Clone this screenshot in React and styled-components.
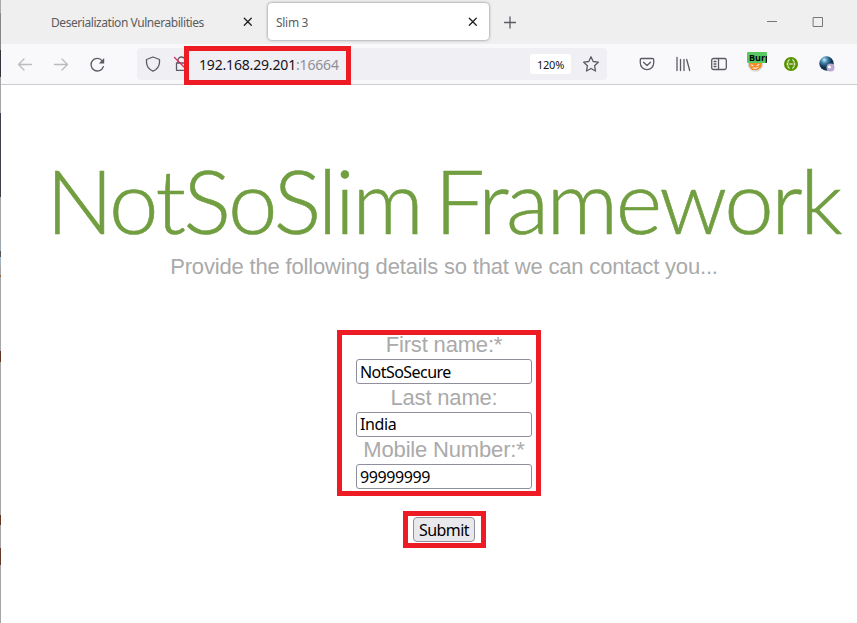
import React from "react";
import styled, { createGlobalStyle } from "styled-components";

const Global = createGlobalStyle`
  * { box-sizing: border-box; }
  body { margin: 0; background: #fff; overflow: hidden; }
`;

const Window = styled.div`
  display: grid;
  grid-template-columns: 1px 856px;
  width: 857px;
  height: 623px;
  background: #fff;
  font-family: "Noto Sans", "Open Sans", sans-serif;
`;

const DesktopEdge = styled.div`
  background: linear-gradient(
    #a9a9a9 0 13px, #858585 13px 50px, #34343c 50px 77px, #a5a5a5 77px 113px,
    #40404a 113px 197px, #a5a5a5 197px 242px, #9aaab4 242px 251px, #555 251px 257px,
    #9fb4c0 257px 266px, #a5a5a5 266px 275px, #9a6236 275px 277px, #a5a5a5 277px 351px,
    #633624 351px 362px, #a5a5a5 362px 515px, #633624 515px 525px, #a5a5a5 525px 548px,
    #663a2b 548px 565px, #a5a5a5 565px
  );
`;

const Browser = styled.div`
  display: flex;
  flex-direction: column;
`;

const TabBar = styled.div`
  display: flex;
  height: 44px;
  padding-top: 3px;
  background: #efefef;
`;

const Tab = styled.div`
  display: flex;
  align-items: center;
  justify-content: space-between;
  width: ${(p) => (p.$active ? "221px" : "267px")};
  height: 37px;
  padding: 0 ${(p) => (p.$active ? "12px 0 8px" : "16px 0 50px")};
  border-radius: 4px;
  background: ${(p) => (p.$active ? "#fff" : "transparent")};
  box-shadow: ${(p) => (p.$active ? "0 0 3px #77777f" : "none")};
  color: #5c5c60;
  font-size: 12px;
  line-height: 17px;
  padding-top: 1px;
  letter-spacing: ${(p) => p.$spacing};
  white-space: nowrap;
`;

const NewTab = styled.div`
  display: flex;
  align-items: center;
  height: 38px;
  margin-left: 15px;
`;

const WindowControls = styled.div`
  display: flex;
  gap: 36px;
  margin: 13px 34px 0 auto;
`;

const NavBar = styled.div`
  display: flex;
  align-items: center;
  height: 41px;
  padding: 0 22px 0 16px;
  background: #f9f9fb;
  border-bottom: 1px solid #ccccd0;
`;

const NavButtons = styled.div`
  display: flex;
  align-items: center;
  gap: 20px;
  width: 120px;
`;

const AddressBar = styled.div`
  display: flex;
  align-items: center;
  width: 470px;
  height: 32px;
  padding: 0 8px;
  border-radius: 4px;
  background: #f0eff4;
`;

const Security = styled.div`
  display: flex;
  align-items: center;
  gap: 12px;
  width: 39px;
`;

const Highlight = styled.div`
  border: 5px solid #ed1c24;
`;

const AddressHighlight = styled(Highlight)`
  display: flex;
  align-items: center;
  flex: none;
  width: 167px;
  height: 39px;
  margin-top: 2px;
  padding: 0 0 2px 10px;
  background: #f0eff4;
  color: #15141a;
  font-size: 14px;
  letter-spacing: -0.17px;
  white-space: nowrap;
`;

const Port = styled.span`
  color: #8f8f96;
`;

const Zoom = styled.div`
  display: flex;
  align-items: center;
  justify-content: center;
  width: 41px;
  height: 20px;
  margin: 0 12px 0 auto;
  border-radius: 3px;
  background: #fff;
  color: #15141a;
  font-size: 11px;
  letter-spacing: -0.2px;
`;

const Extensions = styled.div`
  display: flex;
  align-items: center;
  gap: 20px;
  margin-left: auto;
`;

const Icon = styled.svg`
  display: block;
  flex: none;
  overflow: visible;
  width: ${(p) => p.$w || 16}px;
  height: 16px;
  fill: none;
  stroke: ${(p) => p.$color || "#5b5b66"};
  stroke-width: 1.3;
  stroke-linecap: round;
  stroke-linejoin: round;
`;

const BurpButton = styled.div`
  display: grid;
  width: 20px;
  height: 22px;
  margin: -2px -4px 0 0;
`;

const BurpLabel = styled.span`
  grid-area: 1 / 1;
  z-index: 1;
  width: 20px;
  height: 11px;
  padding-left: 2px;
  overflow: hidden;
  border-radius: 1px;
  background: #58c860;
  color: #000;
  font: bold 9px/11px "Open Sans", sans-serif;
`;

const BurpIcon = styled(Icon)`
  grid-area: 1 / 1;
  margin: 4px 0 0 0;
`;

const Page = styled.main`
  display: flex;
  flex-direction: column;
  align-items: center;
  padding-left: 30px;
  color: #aaa;
  font: 22px/26px "Liberation Sans", Arial, sans-serif;
`;

const Title = styled.h1`
  margin: 62px 2px 0 0;
  height: 107px;
  color: #719e40;
  font: 300 89px/106px Lato, sans-serif;
  letter-spacing: -2.55px;
  word-spacing: -8.5px;
  -webkit-text-stroke: 0.6px #719e40;
  white-space: nowrap;
`;

const Lead = styled.p`
  margin: 0;
  letter-spacing: -0.17px;
  white-space: nowrap;
`;

const Fields = styled(Highlight)`
  display: flex;
  flex-direction: column;
  width: 204px;
  height: 166px;
  margin: 50px 0 0 -10px;
  padding-left: 14px;
`;

const Field = styled.label`
  display: flex;
  flex: none;
  flex-direction: column;
  width: 176px;
  height: 52.5px;
  text-align: center;
  line-height: 19px;
  letter-spacing: -0.17px;
`;

const Input = styled.input`
  width: 176px;
  height: 25px;
  margin-top: 5px;
  padding: 0 3px;
  border: 1px solid #8f8f9d;
  border-radius: 3px;
  background: #fff;
  color: #000;
  font: 16px "Noto Sans", sans-serif;
  letter-spacing: ${(p) => p.$spacing};
`;

const SubmitHighlight = styled(Highlight)`
  display: grid;
  place-items: center;
  width: 83px;
  height: 37px;
  margin-top: 15px;
`;

const Submit = styled.button`
  width: 62px;
  height: 25px;
  padding: 0;
  border: 1px solid #8f8f9d;
  border-radius: 4px;
  background: #e9e9ed;
  color: #000;
  font: 16px/22px "Noto Sans", sans-serif;
  letter-spacing: -0.6px;
`;

const Close = () => (
  <Icon $w={8} $color="#222" viewBox="0 0 8 16"><path d="M0.3 4.3l7 7M7.3 4.3l-7 7" /></Icon>
);

const fields = [
  { label: "First name:*", value: "NotSoSecure", spacing: "-0.55px" },
  { label: "Last name:", value: "India", spacing: "-0.4px" },
  { label: "Mobile Number:*", value: "99999999", spacing: "-0.4px" },
];

export default function App() {
  return (
    <Window>
      <Global />
      <DesktopEdge />
      <Browser>
        <TabBar>
          <Tab $spacing="-0.44px">Deserialization Vulnerabilities<Close /></Tab>
          <Tab $active $spacing="-0.3px">Slim 3<Close /></Tab>
          <NewTab><Icon $w={12} viewBox="0 0 12 16"><path d="M0.5 8.5h11M6 3v11" /></Icon></NewTab>
          <WindowControls>
            <Icon $w={10} $color="#777" viewBox="0 0 10 16"><path d="M0 5.5h10" strokeWidth="1" strokeLinecap="butt" /></Icon>
            <Icon $w={10} $color="#777" viewBox="0 0 10 16"><path d="M.5 1.5h9v9h-9z" strokeWidth="1" strokeLinejoin="miter" /></Icon>
          </WindowControls>
        </TabBar>
        <NavBar>
          <NavButtons>
            <Icon $color="#bbbbc0" viewBox="0 0 16 16"><path d="M14.5 8.5H1.5M7 3L1.5 8.5 7 14" /></Icon>
            <Icon $color="#bbbbc0" viewBox="0 0 16 16"><path d="M1.5 8.5h13M9 3l5.5 5.5L9 14" /></Icon>
            <Icon viewBox="0 0 16 16"><path d="M14.3 10.7A6.3 6.3 0 1 1 13.3 4.8" /><path d="M15.2 2v5.4h-5.4z" fill="#5b5b66" stroke="none" /></Icon>
          </NavButtons>
          <AddressBar>
            <Security>
              <Icon viewBox="0 0 16 16"><path d="M8 1l6.5 2.5V6.5C14.3 10.5 11.7 13.6 8 15.2 4.3 13.6 1.7 10.5 1.5 6.5V3.5z" /></Icon>
              <Icon viewBox="0 0 16 16"><path d="M5 7V4.5a3.5 3.5 0 0 1 7 0V7M3.5 7h10v7.3h-10z" /><path d="M1.5 1.5l13 13" stroke="#e22850" /></Icon>
            </Security>
            <AddressHighlight>192.168.29.201<Port>:16664</Port></AddressHighlight>
            <Zoom>120%</Zoom>
            <Icon viewBox="0 0 16 16"><path d="M8 .8l2.2 4.7 5.1.7-3.7 3.6.9 5.2L8 12.5 3.5 15l.9-5.2L.7 6.2l5.1-.7z" /></Icon>
          </AddressBar>
          <Extensions>
            <Icon viewBox="0 0 16 16"><path d="M2.6 2.5h10.8q1.3 0 1.3 1.3V7a6.7 6.7 0 0 1-13.4 0V3.8q0-1.3 1.3-1.3zM4.5 6.2L8 9.5l3.5-3.3" /></Icon>
            <Icon viewBox="0 0 16 16"><path d="M2 1.5v13M5.5 3.5v11M9 3.500v11M11.7 3.5l3 11" /></Icon>
            <Icon viewBox="0 0 16 16"><rect x=".7" y="2.5" width="14.6" height="11" rx="1.7" /><path d="M7.5 2.5v11M3 5.5h2M3 8h2M3 10.5h2" /></Icon>
            <BurpButton>
              <BurpLabel>Burp</BurpLabel>
              <BurpIcon viewBox="0 0 16 16">
                <circle cx="8.5" cy="8" r="7.3" fill="#dedede" stroke="#ccc" strokeWidth=".7" />
                <path d="M2 5l3 1.5 6-.5 4-2-.5 7-4 3H5l-3-4z" fill="#f28c28" stroke="none" />
                <path d="M4 9l2 .5M10 9.5l2-1M6 12l3 .3 2-1" stroke="#fff" strokeWidth="1" />
              </BurpIcon>
            </BurpButton>
            <Icon viewBox="0 0 16 16">
              <circle cx="8" cy="8" r="7" fill="#579300" stroke="none" />
              <path d="M6.5 3.8q-1.5 0-1.5 1.5v1.2Q5 8 3.7 8 5 8 5 9.5v1.2q0 1.5 1.5 1.5M9.5 3.8q1.5 0 1.5 1.5v1.2Q11 8 12.3 8 11 8 11 9.5v1.2q0 1.5-1.5 1.5M6.5 8h3" stroke="#fff" strokeWidth="1" />
            </Icon>
            <Icon viewBox="0 0 16 16">
              <defs><radialGradient id="globe" cx=".35" cy=".25"><stop stopColor="#d2edfa" /><stop offset=".45" stopColor="#4387b4" /><stop offset="1" stopColor="#123450" /></radialGradient></defs>
              <circle cx="7.5" cy="7.5" r="7.2" fill="url(#globe)" stroke="none" />
              <circle cx="11.5" cy="11.5" r="4" fill="#b9a9d0" stroke="none" />
              <circle cx="10.5" cy="11" r="1.5" fill="#fff" stroke="none" />
            </Icon>
          </Extensions>
        </NavBar>
        <Page>
          <Title>NotSoSlim Framework</Title>
          <Lead>Provide the following details so that we can contact you...</Lead>
          <Fields>
            {fields.map((f) => (
              <Field key={f.label}>{f.label}<Input defaultValue={f.value} $spacing={f.spacing} /></Field>
            ))}
          </Fields>
          <SubmitHighlight><Submit>Submit</Submit></SubmitHighlight>
        </Page>
      </Browser>
    </Window>
  );
}
